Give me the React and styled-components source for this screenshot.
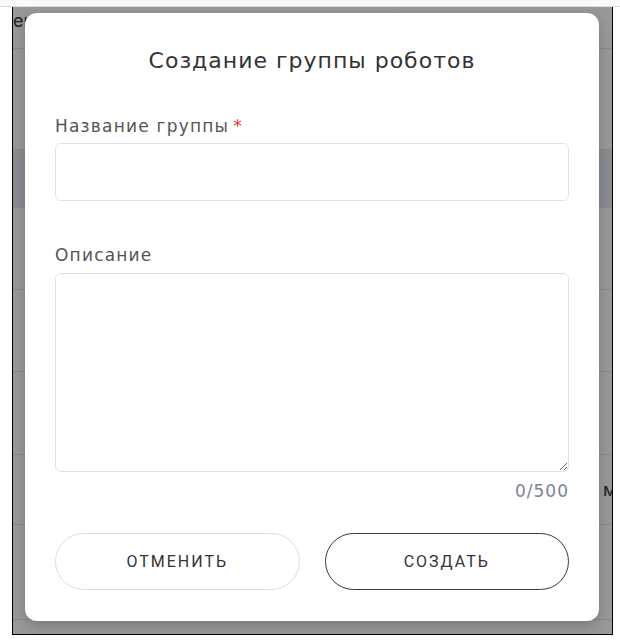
import React, { useState } from "react";
import styled, { createGlobalStyle } from "styled-components";

const GlobalStyle = createGlobalStyle`
  html, body {
    margin: 0;
    padding: 0;
    background: #ffffff;
  }
  body {
    font-family: "DejaVu Sans", "Noto Sans", "Liberation Sans", sans-serif;
  }
  * {
    box-sizing: border-box;
  }
`;

const Page = styled.div`
  width: 620px;
  height: 644px;
  background: #ffffff;
  overflow: hidden;
`;

const TopStrip = styled.div`
  height: 7px;
  background: #f9f9f9;
  border-bottom: 1px solid #dcdcdc;
`;

const Frame = styled.div`
  position: relative;
  margin-left: 12px;
  width: 601px;
  height: 628px;
  border-left: 1px solid #000;
  border-right: 1px solid #000;
  border-bottom: 1px solid #000;
  overflow: hidden;
`;

/* page that sits below the dialog */
const Table = styled.div`
  display: flex;
  flex-direction: column;
  font-family: Inter, "Liberation Sans", sans-serif;
`;

const Row = styled.div`
  height: ${(p) => p.$h}px;
  display: flex;
  align-items: ${(p) => (p.$top ? "flex-start" : "center")};
  background: ${(p) => (p.$shade ? "#e7ebf3" : "#ffffff")};
  border-bottom: 1px solid #e4e4e4;
  font-size: 18px;
  color: #444;
  white-space: nowrap;
`;

const Cell = styled.span`
  width: ${(p) => p.$w}px;
  flex: none;
  padding-top: ${(p) => p.$pt || 0}px;
  color: ${(p) => (p.$red ? "#c62828" : "#3a3a3a")};
`;

const Overlay = styled.div`
  position: absolute;
  inset: 0;
  background: rgba(0, 0, 0, 0.4);
  display: flex;
  justify-content: flex-start;
  align-items: flex-start;
  padding: 6px 0 0 12px;
`;

const Modal = styled.div`
  width: 574px;
  background: #fff;
  border-radius: 12px;
  box-shadow: 0 4px 14px rgba(0, 0, 0, 0.22);
  padding: 36px 30px 31px;
  display: flex;
  flex-direction: column;
`;

const Title = styled.h2`
  margin: 0;
  font-size: 22px;
  line-height: 24px;
  font-weight: 400;
  letter-spacing: 1px;
  color: #333;
  text-align: center;
`;

const Field = styled.div`
  display: flex;
  flex-direction: column;
  margin-top: ${(p) => p.$mt}px;
`;

const Label = styled.label`
  font-size: 17px;
  line-height: 20px;
  letter-spacing: 1.2px;
  color: #555;
  margin-bottom: ${(p) => p.$gap}px;
`;

const Required = styled.span`
  color: #e53935;
  margin-left: 4px;
`;

const Input = styled.input`
  height: 58px;
  width: 100%;
  border: 1px solid #dde2ea;
  border-radius: 6px;
  padding: 0 14px;
  font: inherit;
  font-size: 16px;
  outline: none;
`;

const TextArea = styled.textarea`
  height: 199px;
  width: 100%;
  border: 1px solid #dde2ea;
  border-radius: 6px;
  padding: 12px 14px;
  font: inherit;
  font-size: 16px;
  outline: none;
  resize: vertical;
`;

const Counter = styled.div`
  margin-top: 9px;
  text-align: right;
  font-size: 17px;
  line-height: 20px;
  letter-spacing: 1px;
  color: #7b8494;
`;

const Actions = styled.div`
  display: grid;
  grid-template-columns: 1fr 1fr;
  gap: 25px;
  margin-top: 32px;
`;

const Button = styled.button`
  height: 57px;
  border-radius: 29px;
  background: #fff;
  border: 1px solid ${(p) => (p.$primary ? "#3a3a3a" : "#d9dfe8")};
  font-family: Roboto, "Liberation Sans", sans-serif;
  font-size: 16px;
  font-weight: 400;
  letter-spacing: 2px;
  text-transform: uppercase;
  color: #333;
  cursor: pointer;
`;

export default function App() {
  const [name, setName] = useState("");
  const [desc, setDesc] = useState("");

  return (
    <Page>
      <GlobalStyle />
      <TopStrip />
      <Frame>
        <Table>
          <Row $h={42} $top>
            <Cell $w={60} $pt={3}>ен</Cell>
            <Cell $w={292} $pt={3}>бот</Cell>
            <Cell $w={200} $pt={3} $red>Робот</Cell>
          </Row>
          <Row $h={101} />
          <Row $h={58} $shade />
          <Row $h={82} />
          <Row $h={82} />
          <Row $h={83} />
          <Row $h={70}>
            <Cell $w={590} />
            <Cell $w={20}>м</Cell>
          </Row>
          <Row $h={95} />
        </Table>
        <Overlay>
          <Modal>
            <Title>Создание группы роботов</Title>
            <Field $mt={43}>
              <Label $gap={7}>
                Название группы<Required>*</Required>
              </Label>
              <Input value={name} onChange={(e) => setName(e.target.value)} />
            </Field>
            <Field $mt={44}>
              <Label $gap={8}>Описание</Label>
              <TextArea
                value={desc}
                maxLength={500}
                onChange={(e) => setDesc(e.target.value)}
              />
            </Field>
            <Counter>{desc.length}/500</Counter>
            <Actions>
              <Button>Отменить</Button>
              <Button $primary>Создать</Button>
            </Actions>
          </Modal>
        </Overlay>
      </Frame>
    </Page>
  );
}
